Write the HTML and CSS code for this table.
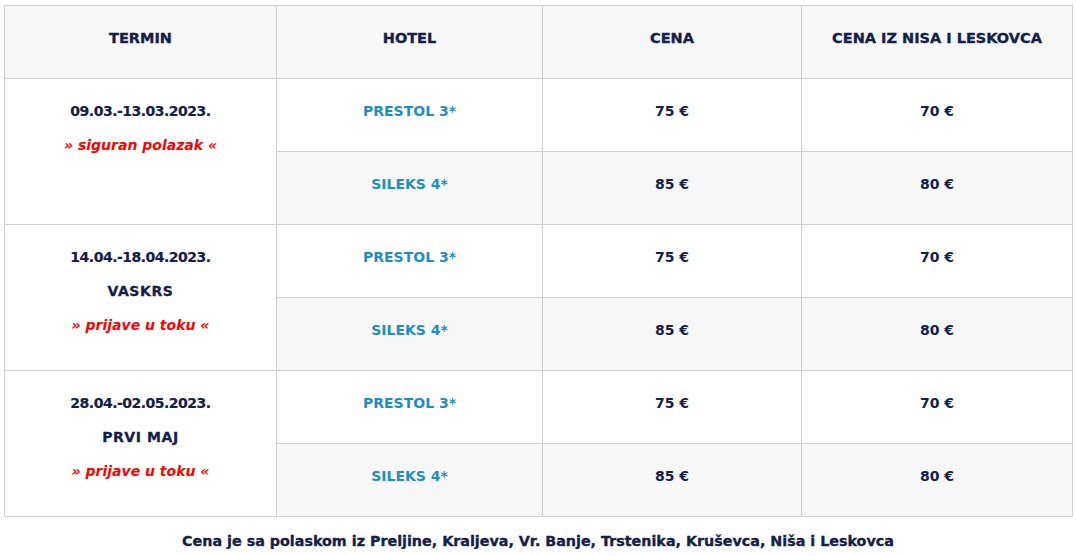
FILE: index.html
```html
<!DOCTYPE html>
<html lang="sr">
<head>
<meta charset="utf-8">
<title>Termini</title>
<link rel="stylesheet" href="styles.css">
</head>
<body>
<div class="wrap">
  <table class="prices">
    <colgroup>
      <col class="c1"><col class="c2"><col class="c3"><col class="c4">
    </colgroup>
    <thead>
      <tr>
        <th>TERMIN</th>
        <th>HOTEL</th>
        <th>CENA</th>
        <th>CENA IZ NISA I LESKOVCA</th>
      </tr>
    </thead>
    <tbody>
      <tr>
        <td class="term" rowspan="2"><span class="ln date">09.03.-13.03.2023.</span><span class="ln red">» siguran polazak «</span><span class="ln">&nbsp;</span></td>
        <td class="hotel">PRESTOL 3*</td>
        <td>75 €</td>
        <td>70 €</td>
      </tr>
      <tr class="alt">
        <td class="hotel">SILEKS 4*</td>
        <td>85 €</td>
        <td>80 €</td>
      </tr>
      <tr>
        <td class="term" rowspan="2"><span class="ln date">14.04.-18.04.2023.</span><span class="ln label">VASKRS</span><span class="ln red">» prijave u toku «</span></td>
        <td class="hotel">PRESTOL 3*</td>
        <td>75 €</td>
        <td>70 €</td>
      </tr>
      <tr class="alt">
        <td class="hotel">SILEKS 4*</td>
        <td>85 €</td>
        <td>80 €</td>
      </tr>
      <tr>
        <td class="term" rowspan="2"><span class="ln date">28.04.-02.05.2023.</span><span class="ln label">PRVI MAJ</span><span class="ln red">» prijave u toku «</span></td>
        <td class="hotel">PRESTOL 3*</td>
        <td>75 €</td>
        <td>70 €</td>
      </tr>
      <tr class="alt">
        <td class="hotel">SILEKS 4*</td>
        <td>85 €</td>
        <td>80 €</td>
      </tr>
    </tbody>
  </table>
  <p class="note">Cena je sa polaskom iz Preljine, Kraljeva, Vr. Banje, Trstenika, Kruševca, Niša i Leskovca</p>
</div>
</body>
</html>
```
FILE: styles.css
```css
* { box-sizing: border-box; }
body {
  margin: 0;
  background: #fff;
  font-family: "DejaVu Sans", "Liberation Sans", sans-serif;
  color: #13204a;
}
.wrap {
  padding: 5px 4px 0;
}
.prices {
  width: 100%;
  border-collapse: collapse;
  table-layout: fixed;
}
.c1 { width: 272px; }
.c2 { width: 266px; }
.c3 { width: 259px; }
.c4 { width: 271px; }
.prices th, .prices td {
  border: 1px solid #cfcfcf;
  text-align: center;
  vertical-align: middle;
  padding: 0 0 9px;
  height: 73px;
  font-size: 14px;
  font-weight: 700;
  line-height: 34px;
}
.prices thead th {
  background: #f7f7f7;
  font-size: 14.5px;
  font-weight: 800;
  color: #13204a;
  -webkit-text-stroke: 0.35px #13204a;
}
.prices tr.alt td { background: #f7f7f7; }
.prices td.term { background: #fff; padding-bottom: 13px; }
.hotel { color: #1b8fc2; }
.ln { display: block; }
.date { letter-spacing: -0.5px; -webkit-text-stroke: 0.2px #13204a; }
.label { letter-spacing: 0.6px; -webkit-text-stroke: 0.3px #13204a; }
.red { color: #ff0000; font-style: italic; font-weight: 600; }
.note {
  margin: 16px 0 0;
  text-align: center;
  font-size: 14.3px;
  font-weight: 800;
  color: #13204a;
  -webkit-text-stroke: 0.35px #13204a;
}
```
